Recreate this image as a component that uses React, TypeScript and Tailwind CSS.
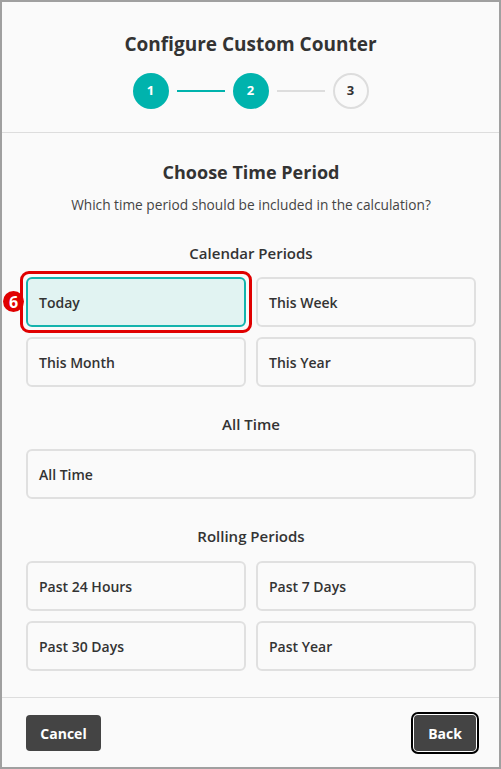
import React from "react";

const font = { fontFamily: '"Open Sans", "Noto Sans", sans-serif' };

function Option({ label, selected }: { label: string; selected?: boolean }) {
  return (
    <button
      className={
        "h-[50px] w-full rounded-[6px] border-2 px-[11px] text-left text-[14px] font-semibold text-[#333] " +
        (selected ? "border-[#14b3ad] bg-[#e1f3f2]" : "border-[#e0e0e0] bg-[#fafafa]")
      }
    >
      {label}
    </button>
  );
}

function Heading({ children }: { children: React.ReactNode }) {
  return <h3 className="text-center text-[15px] font-semibold leading-[20px] text-[#333]">{children}</h3>;
}

export default function App() {
  return (
    <div style={font} className="h-[769px] w-[501px] overflow-hidden">
      <div className="relative flex h-full w-full flex-col border-2 border-[#a0a0a0] bg-[#fafafa]">
        {/* header */}
        <div className="flex flex-col items-center border-b border-[#dddddd] pb-[23px] pt-[30px]">
          <h1 className="text-[19px] font-bold leading-[24px] text-[#333]">Configure Custom Counter</h1>
          <div className="mt-[17px] flex items-center">
            <div className="flex h-[36px] w-[36px] items-center justify-center rounded-full bg-[#00b3ad] text-[13px] font-bold text-white">1</div>
            <div className="mx-[8px] h-[2px] w-[48px] bg-[#00b3ad]" />
            <div className="flex h-[36px] w-[36px] items-center justify-center rounded-full bg-[#00b3ad] text-[13px] font-bold text-white">2</div>
            <div className="mx-[8px] h-[2px] w-[48px] bg-[#dddddd]" />
            <div className="flex h-[36px] w-[36px] items-center justify-center rounded-full border-2 border-[#dddddd] bg-[#fafafa] text-[13px] font-bold text-[#333]">3</div>
          </div>
        </div>

        {/* body */}
        <div className="flex flex-1 flex-col pl-[24px] pr-[23px] pt-[27px]">
          <h2 className="text-center text-[18px] font-bold leading-[24px] text-[#333]">Choose Time Period</h2>
          <p className="mt-[12px] text-center text-[13.7px] leading-[18px] text-[#444]">
            Which time period should be included in the calculation?
          </p>

          <div className="mt-[29px]">
            <Heading>Calendar Periods</Heading>
          </div>
          <div className="relative mt-[14px] grid grid-cols-2 gap-[10px]">
            <div className="relative">
              <Option label="Today" selected />
              <div className="pointer-events-none absolute -inset-[6px] rounded-[9px] border-[3px] border-[#e00000]" />
              <div className="absolute left-[-23px] top-[14px] flex h-[21px] w-[21px] items-center justify-center rounded-full bg-[#e00000] text-[16px] font-bold leading-none text-white">
                6
              </div>
            </div>
            <Option label="This Week" />
            <Option label="This Month" />
            <Option label="This Year" />
          </div>

          <div className="mt-[27px]">
            <Heading>All Time</Heading>
          </div>
          <div className="mt-[15px]">
            <Option label="All Time" />
          </div>

          <div className="mt-[27px]">
            <Heading>Rolling Periods</Heading>
          </div>
          <div className="mt-[15px] grid grid-cols-2 gap-[10px]">
            <Option label="Past 24 Hours" />
            <Option label="Past 7 Days" />
            <Option label="Past 30 Days" />
            <Option label="Past Year" />
          </div>
        </div>

        {/* footer */}
        <div className="flex items-center justify-between border-t border-[#dddddd] pb-[16px] pl-[24px] pr-[23px] pt-[17px]">
          <button className="h-[36px] w-[75px] rounded-[4px] bg-[#444] text-[14px] font-bold text-white">Cancel</button>
          <button className="h-[36px] w-[62px] rounded-[4px] bg-[#444] text-[14px] font-bold text-white outline outline-2 outline-offset-[1px] outline-black ring-1 ring-white">
            Back
          </button>
        </div>
      </div>
    </div>
  );
}
